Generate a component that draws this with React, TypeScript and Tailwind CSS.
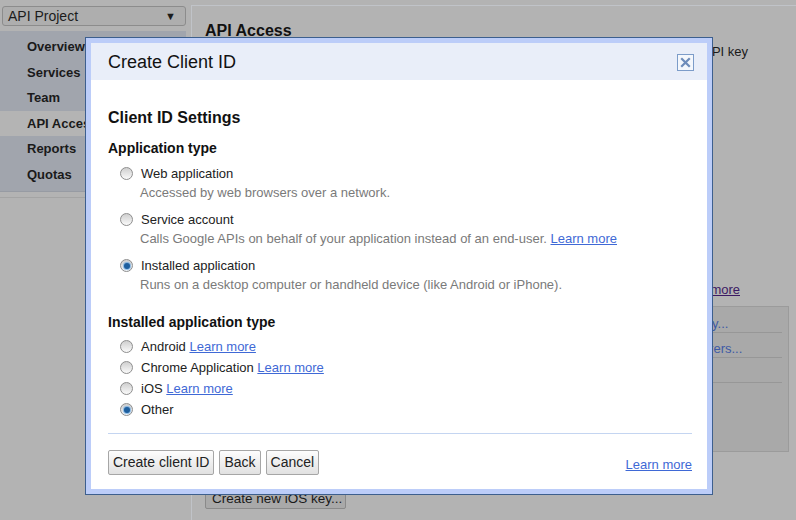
import React from 'react';

const NAV = ['Overview', 'Services', 'Team', 'API Access', 'Reports', 'Quotas'];

function Radio({ checked = false }: { checked?: boolean }) {
  return (
    <span className="flex h-[13px] w-[13px] shrink-0 items-center justify-center rounded-full border border-[#8e8e8e] bg-linear-to-b from-[#cfcfcf] to-[#fafafa]">
      {checked && (
        <span className="h-[6px] w-[6px] rounded-full bg-[#1e5f9e] shadow-[0_0_1px_1px_rgba(90,160,225,0.7)]" />
      )}
    </span>
  );
}

function LearnMore({ className = '' }: { className?: string }) {
  return <a className={`cursor-pointer text-[#3f69d6] underline ${className}`}>Learn more</a>;
}

const APP_TYPES = [
  { label: 'Web application', desc: 'Accessed by web browsers over a network.' },
  { label: 'Service account', desc: 'Calls Google APIs on behalf of your application instead of an end-user.', link: true },
  { label: 'Installed application', desc: 'Runs on a desktop computer or handheld device (like Android or iPhone).', checked: true },
];

const INSTALLED = [
  { label: 'Android', link: true },
  { label: 'Chrome Application', link: true },
  { label: 'iOS', link: true },
  { label: 'Other', checked: true },
];

function Button({ children }: { children: React.ReactNode }) {
  return (
    <button className="h-[25px] rounded-[2px] border border-[#a6a6a6] bg-linear-to-b from-[#fdfdfd] to-[#e1e1e1] px-[4px] text-[14px] leading-[23px] text-[#222]">
      {children}
    </button>
  );
}

export default function App() {
  return (
    <div className="relative h-[520px] w-[796px] overflow-hidden bg-[#b3b3b3] font-['Liberation_Sans',Arial,sans-serif] text-[#222]">
      {/* page behind the dialog, dimmed */}
      <div className="flex h-full pt-[5px]">
        <aside className="w-[186px] shrink-0">
          <div className="ml-[2px] mt-[1px] flex h-[20px] w-[184px] items-center justify-between rounded-[3px] border border-[#8c8c8c] bg-[#aeaeae] pl-[5px] pr-[9px]">
            <span className="text-[14px] leading-none text-[#1c1c1c]">API Project</span>
            <span className="text-[11px] leading-none text-[#1c1c1c]">▼</span>
          </div>
          <nav className="mt-[5px] border-b border-[#979ba3] bg-[#a1a5ad] py-[3px] pl-[2px]">
            {NAV.map(n => (
              <div
                key={n}
                className={`h-[25.6px] pl-[25px] text-[13px] font-bold leading-[25.6px] text-[#1a1a1a] ${
                  n === 'API Access' ? '-ml-[2px] bg-[#b4b4b4] pl-[27px]' : ''
                }`}
              >
                {n}
              </div>
            ))}
          </nav>
          <div className="mt-[5px] border-t border-[#a4a4a4]" />
        </aside>

        <main className="ml-[5px] flex-1 border-l border-t border-[#c0c3c8] pl-[13px] pt-[15px]">
          <h1 className="text-[16px] font-bold leading-[20px] text-[#111]">API Access</h1>
          <p className="mt-[3px] w-[543px] text-right text-[13px] leading-[16px] text-[#1a1a1a]">
            To create an OAuth client ID or an API key
          </p>
          <p className="mt-[222px] w-[535px] text-right text-[13px] leading-[16px]">
            <a className="text-[#3c1a63] underline">Learn more</a>
          </p>
          <div className="mt-[8px] flex">
            <div className="ml-[399px] h-[146px] w-[185px] border border-[#9b9b9b] bg-[#a9a9a9] pl-[8px] pr-[6px] pt-[1px]">
              {['Generate new key...', 'Edit allowed referers...', 'Delete key...'].map(r => (
                <div key={r} className="h-[25px] border-b border-[#979797] pt-[8px] text-[13px] leading-[16px] text-[#3e5aa6]">
                  {r}
                </div>
              ))}
            </div>
          </div>
          <button className="mt-[36px] h-[21px] w-[141px] rounded-[2px] border border-[#8a8a8a] bg-[#a9a9a9] pl-[6px] text-left text-[13.5px] leading-[19px] text-[#1a1a1a]">
            Create new iOS key...
          </button>
        </main>
      </div>

      {/* dialog */}
      <div className="absolute left-[85px] top-[37px] w-[628px] border border-[#3d5f8e] bg-[#bccdf9] p-[5px]">
        <div className="flex h-[37px] items-center justify-between bg-[#e9eef9] pl-[17px] pr-[13px]">
          <span className="text-[18px] leading-none text-[#111]">Create Client ID</span>
          <span className="mt-[2px] flex h-[17px] w-[17px] items-center justify-center border border-[#7c9cc9] bg-[#f4f7fc]">
            <svg width="11" height="11" viewBox="0 0 11 11">
              <path d="M2 2 L9 9 M9 2 L2 9" stroke="#6e8cba" strokeWidth="2.2" strokeLinecap="square" />
            </svg>
          </span>
        </div>

        <div className="bg-white pb-[14px] pl-[17px] pr-[15px] pt-[28px] text-[13px]">
          <h2 className="text-[16px] font-bold leading-[20px] text-[#111]">Client ID Settings</h2>
          <h3 className="mt-[11px] text-[14px] font-bold leading-[18px] text-[#111]">Application type</h3>

          <div className="mt-[7px] flex flex-col gap-[8px]">
            {APP_TYPES.map(t => (
              <div key={t.label}>
                <div className="flex h-[19px] items-center gap-[8px] pl-[12px]">
                  <Radio checked={t.checked} />
                  <span className="leading-[19px]">{t.label}</span>
                </div>
                <div className="pl-[32px] leading-[19px] text-[#7a7a7a]">
                  {t.desc}
                  {t.link && (
                    <>
                      {' '}
                      <LearnMore />
                    </>
                  )}
                </div>
              </div>
            ))}
          </div>

          <h3 className="mt-[19px] text-[14px] font-bold leading-[18px] text-[#111]">Installed application type</h3>
          <div className="mt-[5px]">
            {INSTALLED.map(t => (
              <div key={t.label} className="flex h-[21px] items-center gap-[8px] pl-[12px]">
                <Radio checked={t.checked} />
                <span className="leading-[21px]">
                  {t.label}
                  {t.link && (
                    <>
                      {' '}
                      <LearnMore />
                    </>
                  )}
                </span>
              </div>
            ))}
          </div>

          <div className="mt-[13px] border-t border-[#c4d5f1]" />

          <div className="mt-[16px] flex items-end justify-between">
            <div className="flex gap-[5px]">
              <Button>Create client ID</Button>
              <Button>Back</Button>
              <Button>Cancel</Button>
            </div>
            <LearnMore className="mb-[2px] leading-[16px]" />
          </div>
        </div>
      </div>
    </div>
  );
}
